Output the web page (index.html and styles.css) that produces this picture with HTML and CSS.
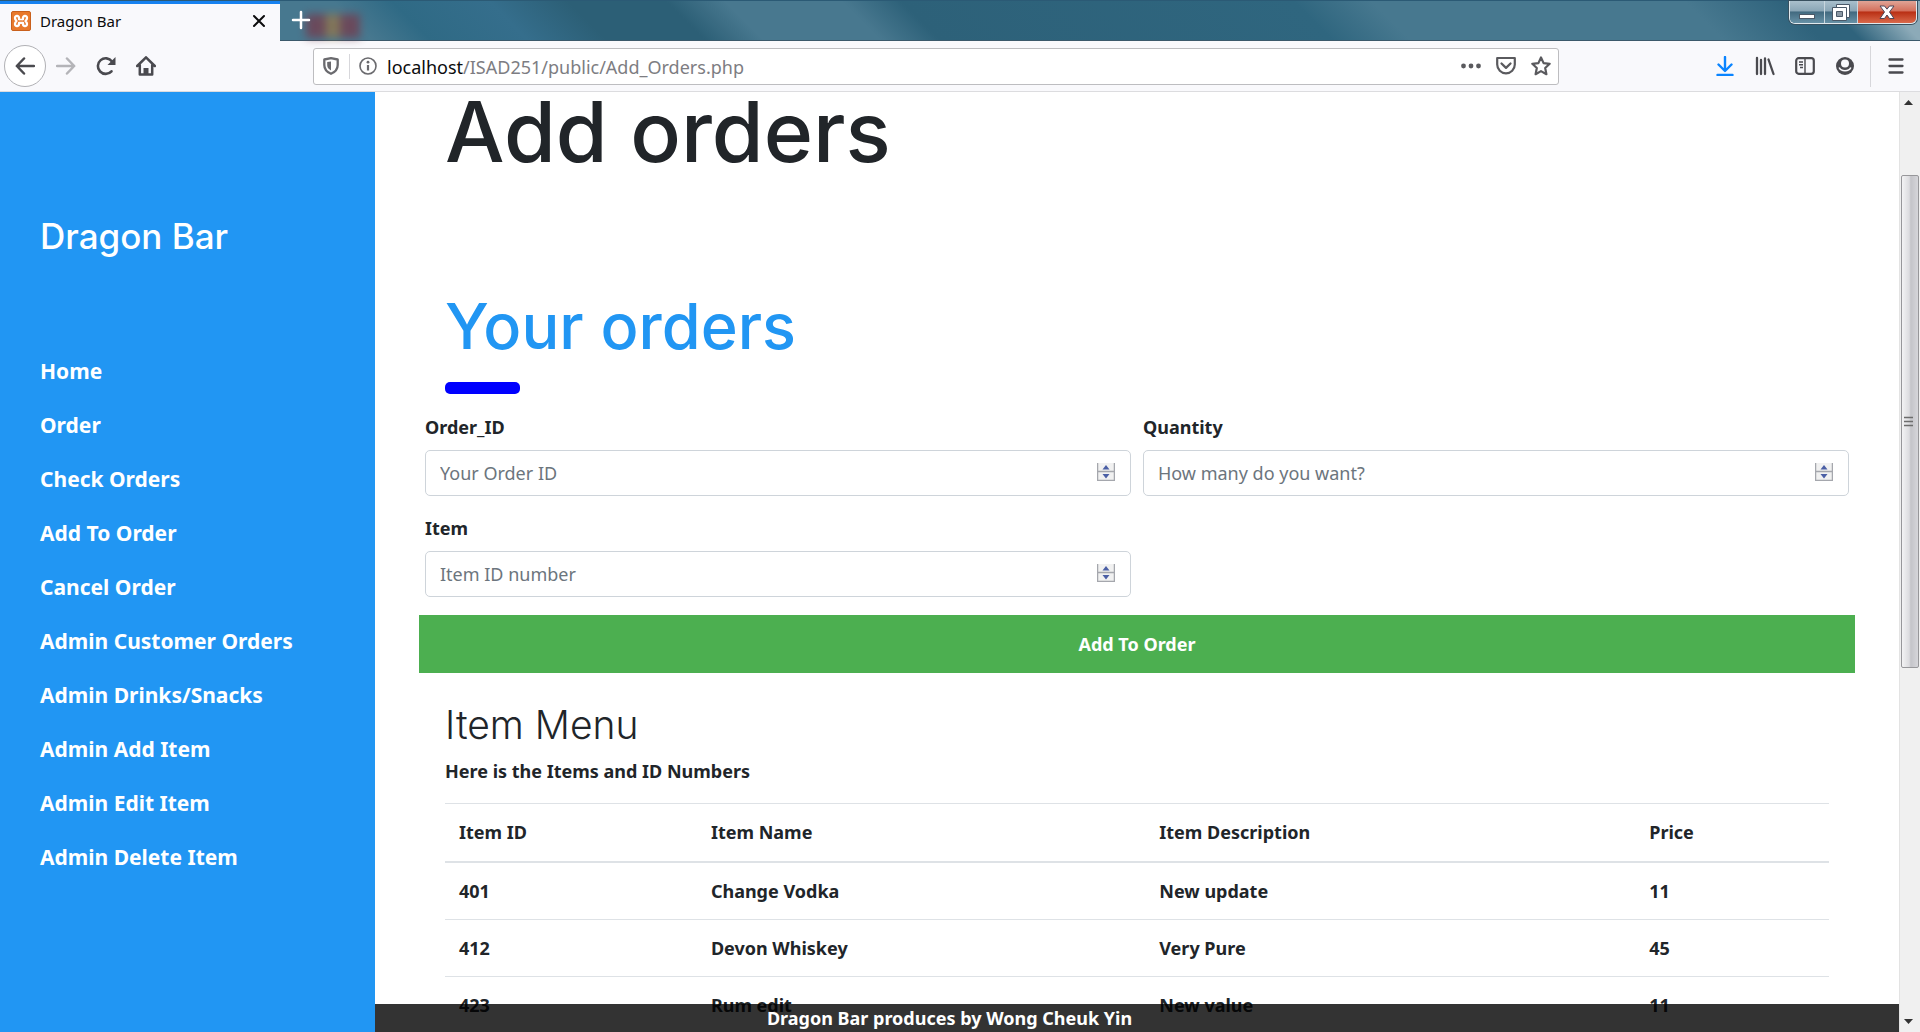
FILE: index.html
```html
<!DOCTYPE html>
<html lang="en">
<head>
<meta charset="utf-8">
<title>Dragon Bar</title>
<link rel="stylesheet" href="styles.css">
</head>
<body>
<header class="browser">
  <div class="titlebar">
    <div class="tab">
      <svg class="favicon" width="20" height="20" viewBox="0 0 20 20"><rect x=".5" y=".5" width="19" height="19" rx="1.500" fill="#e8792c" stroke="#c9601c"/><path d="M8 8.200C8.500 4 4 4 4 7c0 1.500.8 2.200 1.500 3C4.800 10.800 4 11.500 4 13c0 3 4.500 3 4-1.200h4c-.5 4.200 4 4.200 4 1.200 0-1.500-.8-2.200-1.500-3 .7-.8 1.500-1.500 1.500-3 0-3-4.500-3-4 1.200" fill="none" stroke="#fff" stroke-width="2.300" stroke-linejoin="round" stroke-linecap="round"/><path d="M8 8.500h4" stroke="#fff" stroke-width="1.600"/></svg>
      <span class="tab-title">Dragon Bar</span>
      <button class="icon-btn" aria-label="Close tab"><svg width="14" height="14" viewBox="0 0 14 14"><path d="M2 2l10 10M12 2L2 12" stroke="#0c0c0d" stroke-width="2" stroke-linecap="round"/></svg></button>
    </div>
    <button class="icon-btn new-tab" aria-label="New tab"><svg width="20" height="20" viewBox="0 0 20 20"><path d="M10 2v16M2 10h16" stroke="#fff" stroke-width="2.500" stroke-linecap="round"/></svg></button>
    <span class="desk-glow"></span>
    <div class="win-buttons">
      <button class="win minimize" aria-label="Minimize"><svg width="18" height="18" viewBox="0 0 18 18"><rect x="1.500" y="11.500" width="15" height="4" fill="#fff" stroke="#4b5968"/></svg></button>
      <button class="win restore" aria-label="Restore"><svg width="20" height="20" viewBox="0 0 20 20"><path d="M5.500 2.500h13v13h-13z" fill="#fff" stroke="#4b5968"/><path d="M1.500 5.500h14v13h-14z" fill="#fff" stroke="#4b5968"/><path d="M5.500 9.500h6v5h-6z" fill="#8b98a4" stroke="#4b5968"/></svg></button>
      <button class="win close" aria-label="Close"><svg width="18" height="18" viewBox="0 0 18 18"><path d="M2 3h4.500L9 6.200 11.500 3H16l-4.500 6 4.500 6.500h-4.500L9 12l-2.500 3.500H2L6.500 9z" fill="#fff" stroke="#4b4658"/></svg></button>
    </div>
  </div>
  <div class="toolbar">
    <nav class="nav-buttons" aria-label="Browser">
      <button class="icon-btn back" aria-label="Back"><svg width="20" height="20" viewBox="0 0 20 20"><path d="M19 10H2M9 2.500L1.800 10 9 17.500" fill="none" stroke="#4a4a4f" stroke-width="2.500" stroke-linecap="round" stroke-linejoin="round"/></svg></button>
      <button class="icon-btn" aria-label="Forward"><svg width="20" height="20" viewBox="0 0 20 20"><path d="M1 10h17M11 2.500l7.200 7.500-7.200 7.500" fill="none" stroke="#b4b4b8" stroke-width="2.500" stroke-linecap="round" stroke-linejoin="round"/></svg></button>
      <button class="icon-btn" aria-label="Reload"><svg width="20" height="20" viewBox="0 0 20 20"><path d="M15.500 15.300A7.800 7.800 0 1 1 16 5.500" fill="none" stroke="#4a4a4f" stroke-width="2.600" stroke-linecap="round"/><path d="M19.500 1v8h-8z" fill="#4a4a4f"/></svg></button>
      <button class="icon-btn" aria-label="Home"><svg width="20" height="20" viewBox="0 0 20 20"><path d="M1.200 10L10 1.300 18.800 10M3.800 9v9.500h12.400V9" fill="none" stroke="#4a4a4f" stroke-width="2.500" stroke-linecap="round" stroke-linejoin="round"/><path d="M7.500 18v-6h5v6" fill="#4a4a4f"/></svg></button>
    </nav>
    <div class="urlbar">
      <svg width="18" height="18" viewBox="0 0 18 18"><path d="M9 1.200l6.700 1.300v5.500c0 4-2.500 7-6.700 8.800C4.800 15 2.300 12 2.300 8V2.500z" fill="none" stroke="#6a6a6e" stroke-width="2.300" stroke-linejoin="round"/><path d="M9 4.500v9C6.500 12 5.200 10.500 5.200 8V5z" fill="#6a6a6e"/></svg>
      <span class="url-sep"></span>
      <svg width="18" height="18" viewBox="0 0 18 18"><circle cx="9" cy="9" r="8" fill="none" stroke="#6a6a6e" stroke-width="1.600"/><path d="M9 8v5.500" stroke="#6a6a6e" stroke-width="2.200"/><circle cx="9" cy="5.200" r="1.400" fill="#6a6a6e"/></svg>
      <span class="url"><b>localhost</b>/ISAD251/public/Add_Orders.php</span>
      <svg width="20" height="20" viewBox="0 0 20 20"><g fill="#5a5a5e"><circle cx="2.500" cy="10" r="2.400"/><circle cx="10" cy="10" r="2.400"/><circle cx="17.500" cy="10" r="2.400"/></g></svg>
      <svg width="20" height="20" viewBox="0 0 20 20"><path d="M1.200 2h17.600v6.500a8.800 8.800 0 0 1-17.600 0z" fill="none" stroke="#5a5a5e" stroke-width="2.200" stroke-linejoin="round"/><path d="M5.500 7.500L10 11.800l4.500-4.300" fill="none" stroke="#5a5a5e" stroke-width="2.300" stroke-linecap="round" stroke-linejoin="round"/></svg>
      <svg width="20" height="20" viewBox="0 0 20 20"><path d="M10 1.500l2.600 5.600 6.100.7-4.500 4.200 1.200 6.200-5.400-3.100-5.400 3.100L5.800 12 1.300 7.800l6.100-.7z" fill="none" stroke="#5a5a5e" stroke-width="2.200" stroke-linejoin="round"/></svg>
    </div>
    <div class="tools">
      <button class="icon-btn" aria-label="Downloads"><svg width="20" height="20" viewBox="0 0 20 20"><path d="M10 1v13M3.500 8.500L10 15l6.500-6.500M2.500 19h15" fill="none" stroke="#0a84ff" stroke-width="2.400" stroke-linecap="round" stroke-linejoin="round"/></svg></button>
      <button class="icon-btn" aria-label="Library"><svg width="20" height="20" viewBox="0 0 20 20"><path d="M2 2v16M6 4v14M10 2.500V18M13.500 3.500L18.500 18" fill="none" stroke="#4a4a4f" stroke-width="2.300" stroke-linecap="round"/></svg></button>
      <button class="icon-btn" aria-label="Sidebars"><svg width="20" height="20" viewBox="0 0 20 20"><rect x="1.200" y="2.200" width="17.600" height="15.600" rx="2.500" fill="none" stroke="#4a4a4f" stroke-width="2.200"/><path d="M10 2v16M4 6h4M4 8.800h4M5 11.500h3" stroke="#4a4a4f" stroke-width="1.400"/></svg></button>
      <button class="icon-btn" aria-label="Account"><svg width="20" height="20" viewBox="0 0 20 20"><circle cx="10" cy="10" r="9" fill="#4a4a4f"/><circle cx="10" cy="7.500" r="4" fill="#f9f9fc"/><path d="M4.200 11.500c1.800 4.300 9.800 4.300 11.600 0" fill="none" stroke="#f9f9fc" stroke-width="1.600"/></svg></button>
      <span class="tool-sep"></span>
      <button class="icon-btn" aria-label="Menu"><svg width="20" height="20" viewBox="0 0 20 20"><path d="M3.500 3.500h13M3.500 10h13M3.500 16.500h13" stroke="#4a4a4f" stroke-width="2.300" stroke-linecap="round"/></svg></button>
    </div>
  </div>
</header>

<div class="viewport">
  <div class="page">
    <aside class="sidebar">
      <h3 class="brand">Dragon Bar</h3>
      <nav class="menu" aria-label="Main">
        <a href="#">Home</a>
        <a href="#">Order</a>
        <a href="#">Check Orders</a>
        <a href="#">Add To Order</a>
        <a href="#">Cancel Order</a>
        <a href="#">Admin Customer Orders</a>
        <a href="#">Admin Drinks/Snacks</a>
        <a href="#">Admin Add Item</a>
        <a href="#">Admin Edit Item</a>
        <a href="#">Admin Delete Item</a>
      </nav>
    </aside>
    <main class="content">
      <h1 class="title">Add orders</h1>
      <h2 class="subtitle">Your orders</h2>
      <hr class="rule">
      <form class="order-form">
        <div class="field">
          <label for="order-id">Order_ID</label>
          <div class="number">
            <input id="order-id" type="number" placeholder="Your Order ID">
            <svg class="spin" width="18" height="18" viewBox="0 0 18 18"><path d="M.5 0v17.500h17V0M0 8.500h18" fill="#f1f1f1" stroke="#a5a7ad" stroke-width="1.500"/><path d="M9 2l3.500 4.500h-7zM9 15.500L5.500 11h7z" fill="#4b5fa5"/></svg>
          </div>
        </div>
        <div class="field">
          <label for="quantity">Quantity</label>
          <div class="number">
            <input id="quantity" type="number" placeholder="How many do you want?">
            <svg class="spin" width="18" height="18" viewBox="0 0 18 18"><path d="M.5 0v17.500h17V0M0 8.500h18" fill="#f1f1f1" stroke="#a5a7ad" stroke-width="1.500"/><path d="M9 2l3.500 4.500h-7zM9 15.500L5.500 11h7z" fill="#4b5fa5"/></svg>
          </div>
        </div>
        <div class="field">
          <label for="item">Item</label>
          <div class="number">
            <input id="item" type="number" placeholder="Item ID number">
            <svg class="spin" width="18" height="18" viewBox="0 0 18 18"><path d="M.5 0v17.500h17V0M0 8.500h18" fill="#f1f1f1" stroke="#a5a7ad" stroke-width="1.500"/><path d="M9 2l3.500 4.500h-7zM9 15.500L5.500 11h7z" fill="#4b5fa5"/></svg>
          </div>
        </div>
        <button class="submit" type="button">Add To Order</button>
      </form>
      <h2 class="menu-title">Item Menu</h2>
      <p class="hint">Here is the Items and ID Numbers</p>
      <table class="items">
        <colgroup><col class="col-id"><col class="col-name"><col class="col-desc"><col class="col-price"></colgroup>
        <thead>
          <tr><th>Item ID</th><th>Item Name</th><th>Item Description</th><th>Price</th></tr>
        </thead>
        <tbody>
          <tr><td>401</td><td>Change Vodka</td><td>New update</td><td>11</td></tr>
          <tr><td>412</td><td>Devon Whiskey</td><td>Very Pure</td><td>45</td></tr>
          <tr><td>423</td><td>Rum edit</td><td>New value</td><td>11</td></tr>
        </tbody>
      </table>
    </main>
    <footer class="footer">Dragon Bar produces by Wong Cheuk Yin</footer>
  </div>
  <div class="scrollbar" aria-hidden="true">
    <svg width="9" height="5" viewBox="0 0 9 5"><path d="M4.500 0L9 5H0z" fill="#333"/></svg>
    <div class="track"><div class="thumb"><svg width="9" height="11" viewBox="0 0 9 11"><path d="M0 1.500h9M0 5.500h9M0 9.500h9" stroke="#6d6d6d" stroke-width="1.500"/></svg></div></div>
    <svg width="9" height="5" viewBox="0 0 9 5"><path d="M4.500 5L9 0H0z" fill="#333"/></svg>
  </div>
</div>
</body>
</html>
```
FILE: styles.css
```css
* { box-sizing: border-box; }

body {
  margin: 0;
  height: 100vh;
  display: flex;
  flex-direction: column;
  overflow: hidden;
  font-family: "Noto Sans", "Open Sans", sans-serif;
  font-size: 18px;
  line-height: 28px;
  color: #212529;
  background: #fff;
}

button { font: inherit; }
svg { display: block; flex: none; }

.icon-btn {
  display: flex;
  align-items: center;
  justify-content: center;
  padding: 0;
  border: 0;
  background: none;
}

/* Browser window */
.titlebar {
  display: flex;
  height: 41px;
  border-top: 1px solid #2b5a75;
  background: linear-gradient(45deg, #47788f 0%, #47788f 19%, #2f6a85 22%, #356e8c 27%, #2c5f76 31%, #2c5f76 36%, #48788f 39%, #48788f 45%, #2d6179 48%, #2f667f 68%, #47788f 72%, #47788f 88%, #2f637c 93%, #2f637c 95%, #8caab8 98%);
  box-shadow: inset 0 -1px #3b596b;
}

.tab {
  display: flex;
  align-items: center;
  width: 280px;
  padding: 0 14px 4px 11px;
  gap: 9px;
  border-top: 3px solid #1782f0;
  background: #f9f9fc;
}

.tab-title { flex: 1; font-size: 15px; line-height: 20px; color: #0c0c0d; }

.new-tab { position: relative; z-index: 1; width: 42px; padding-bottom: 2px; }

.desk-glow {
  width: 54px;
  height: 24px;
  margin: 13px 0 0 -16px;
  background: linear-gradient(90deg, #733e50 34%, #91784e 38%, #91784e 60%, #733e50 66%);
  filter: blur(4px);
  opacity: 0.8;
}

.win-buttons {
  display: flex;
  height: 23px;
  margin-left: auto;
  margin-right: 3px;
  border: 1px solid #e0e9ee;
  border-top: 0;
  border-radius: 0 0 6px 6px;
  overflow: hidden;
  box-shadow: 0 0 0 1px #38505f;
}

.win {
  display: flex;
  justify-content: center;
  align-items: center;
  padding: 0;
  border: 0;
  border-right: 1px solid #c8d6de;
  background: linear-gradient(#a9bfcc, #8aa6b6 45%, #426a80 50%, #6791a6);
}

.minimize { width: 35px; }
.restore { width: 33px; }
.close { width: 58px; border: 0; background: linear-gradient(#e0a496, #d4705c 45%, #b92f14 50%, #d9694b); }

.toolbar {
  display: flex;
  align-items: center;
  height: 51px;
  border-bottom: 1px solid #dcdcdf;
  background: #f9f9fc;
  padding: 0 14px 0 4px;
}

.nav-buttons { display: flex; align-items: center; gap: 20px; width: 309px; }

.back {
  width: 42px;
  height: 42px;
  margin-right: -10px;
  border: 1px solid #b1b1b5;
  border-radius: 50%;
  background: #fff;
}

.urlbar {
  display: flex;
  align-items: center;
  flex: 1;
  height: 37px;
  padding: 0 7px 0 8px;
  border: 1px solid #bdbdc0;
  border-radius: 3px;
  background: #fff;
  gap: 15px;
}

.url-sep { width: 1px; height: 25px; margin: 0 -6px; background: #d7d7db; }
.url { flex: 1; margin-left: -5px; padding-top: 2px; color: #7d7d82; white-space: nowrap; }
.url b { font-weight: 400; color: #0c0c0d; }

.tools { display: flex; align-items: center; gap: 20px; margin-left: 156px; }
.tool-sep { width: 1px; height: 41px; margin: 0 -5px; background: #d7d7db; }

.viewport { display: flex; flex: 1; min-height: 0; }

/* Page */
.page { position: relative; display: flex; flex: 1; overflow: hidden; }

.sidebar {
  position: relative;
  z-index: 2;
  width: 375px;
  padding: 120px 40px 0;
  background: #2196f3;
  color: #fff;
}

.brand {
  margin: 0 0 97px;
  font: 500 35px/48px Inter, sans-serif;
}

.menu { display: flex; flex-direction: column; gap: 26px; }
.menu a { font-size: 21px; font-weight: 700; color: #fff; text-decoration: none; white-space: nowrap; }

.content { flex: 1; min-width: 0; padding: 0 70px; font-weight: 700; }

.title { margin: 0; font: 500 84px/80px Inter, sans-serif; }
.subtitle { margin: 114px 0 0; font: 500 63px/80px Inter, sans-serif; color: #2196f3; }

.rule {
  width: 75px;
  height: 12px;
  margin: 16px 0 19px;
  border: 0;
  border-radius: 5px;
  background: #00f;
}

.order-form {
  display: grid;
  grid-template-columns: 1fr 1fr;
  column-gap: 12px;
  row-gap: 18px;
  margin: 0 -20px;
}

.field { display: flex; flex-direction: column; gap: 9px; }
.number { position: relative; }

.number input {
  display: block;
  width: 100%;
  height: 46px;
  padding: 0 14px;
  border: 1px solid #ced4da;
  border-radius: 5px;
  font: 400 18px/28px "Noto Sans", "Open Sans", sans-serif;
  color: #495057;
  appearance: textfield;
}

.number input::placeholder { color: #6c757d; opacity: 1; }
.spin { position: absolute; right: 16px; top: 13px; }

.submit {
  grid-column: 1 / -1;
  height: 58px;
  margin: 0 -6px;
  padding: 0;
  border: 0;
  background: #4caf50;
  color: #fff;
  font-weight: 700;
}

.menu-title { margin: 28px 0 8px; font: 300 39px/48px Inter, sans-serif; }
.hint { margin: 0 0 18px; }

.items { width: 100%; table-layout: fixed; border-collapse: collapse; }
.items th, .items td { padding: 14px; border-top: 1px solid #dee2e6; text-align: left; font-weight: 700; }
.items thead th { border-bottom: 2px solid #dee2e6; line-height: 29px; }
.col-id { width: 18.2%; }
.col-name { width: 32.4%; }
.col-desc { width: 35.4%; }
.col-price { width: 14%; }

.footer {
  position: absolute;
  left: 0;
  right: 0;
  bottom: 0;
  background: rgba(0, 0, 0, 0.8);
  color: #fff;
  font-weight: 700;
  text-align: center;
}

.scrollbar {
  display: flex;
  flex-direction: column;
  align-items: center;
  gap: 8px;
  width: 21px;
  padding: 8px 0;
  border-left: 1px solid #e3e3e3;
  background: #f0f0f0;
}

.scrollbar svg { margin-right: 3px; }
.track { flex: 1; width: 100%; padding: 62px 1px 0; }

.thumb {
  display: flex;
  align-items: center;
  justify-content: center;
  height: 59%;
  border: 1px solid #97979a;
  border-radius: 2px;
  background: linear-gradient(90deg, #f3f3f4, #dcdcdf 45%, #c4c4c9 55%, #d6d6da);
}
```
